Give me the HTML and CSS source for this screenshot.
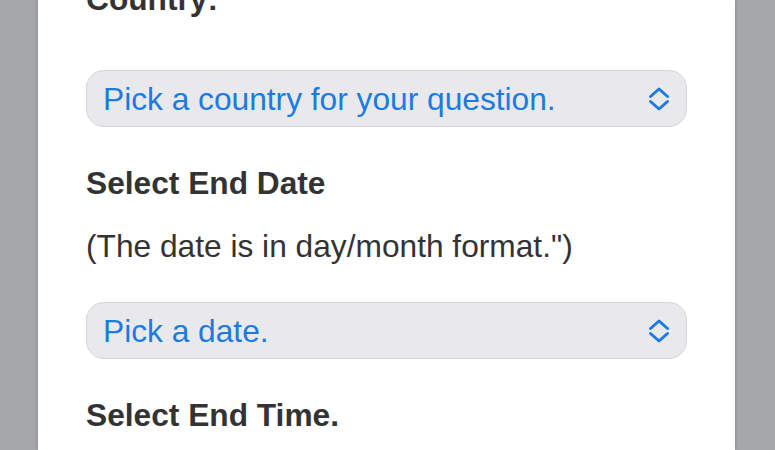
FILE: index.html
```html
<!DOCTYPE html>
<html>
<head>
<meta charset="utf-8">
<link rel="stylesheet" href="styles.css">
</head>
<body>
<div class="panel">
  <div class="form">
    <h2 class="label label-first">Country:</h2>
    <div class="select">
      <span class="select-text">Pick a country for your question.</span>
      <svg class="chev" width="22" height="26" viewBox="0 0 22 26"><path d="M2.5 10.5 L11 3 L19.5 10.5" fill="none" stroke="#1b7be3" stroke-width="3" stroke-linecap="round" stroke-linejoin="round"/><path d="M2.5 15.5 L11 23 L19.5 15.5" fill="none" stroke="#1b7be3" stroke-width="3" stroke-linecap="round" stroke-linejoin="round"/></svg>
    </div>
    <h2 class="label">Select End Date</h2>
    <p class="note">(The date is in day/month format.")</p>
    <div class="select">
      <span class="select-text">Pick a date.</span>
      <svg class="chev" width="22" height="26" viewBox="0 0 22 26"><path d="M2.5 10.5 L11 3 L19.5 10.5" fill="none" stroke="#1b7be3" stroke-width="3" stroke-linecap="round" stroke-linejoin="round"/><path d="M2.5 15.5 L11 23 L19.5 15.5" fill="none" stroke="#1b7be3" stroke-width="3" stroke-linecap="round" stroke-linejoin="round"/></svg>
    </div>
    <h2 class="label">Select End Time.</h2>
  </div>
</div>
</body>
</html>
```
FILE: styles.css
```css
html, body {
  margin: 0;
  padding: 0;
  height: 100%;
  overflow: hidden;
}
body {
  background: #a6a7a9;
  font-family: "Liberation Sans", Arial, Helvetica, sans-serif;
  color: #333333;
}
.panel {
  margin: 0 40px 0 38px;
  background: #ffffff;
  height: 100%;
  box-shadow: 0 0 4px rgba(0, 0, 0, 0.22);
  overflow: hidden;
}
.form {
  display: flex;
  flex-direction: column;
  padding: 0 48px;
  margin-top: -19px;
}
.label {
  margin: 38px 0 0 0;
  font-size: 31.7px;
  line-height: 36px;
  font-weight: bold;
  color: #333333;
}
.label-first {
  margin-top: 0;
}
.note {
  margin: 27px 0 0 0;
  font-size: 31.7px;
  line-height: 36px;
  color: #333333;
}
.select {
  margin-top: 38px;
  height: 57px;
  box-sizing: border-box;
  border: 1px solid #d5d5d7;
  border-radius: 18px;
  background: #e9e9eb;
  display: flex;
  align-items: center;
  justify-content: space-between;
  padding: 0 16px 0 16px;
}
.label-first + .select {
  margin-top: 53px;
}
.select-text {
  font-size: 31.7px;
  line-height: 36px;
  color: #1b7be3;
}
.chev {
  display: block;
}
```
